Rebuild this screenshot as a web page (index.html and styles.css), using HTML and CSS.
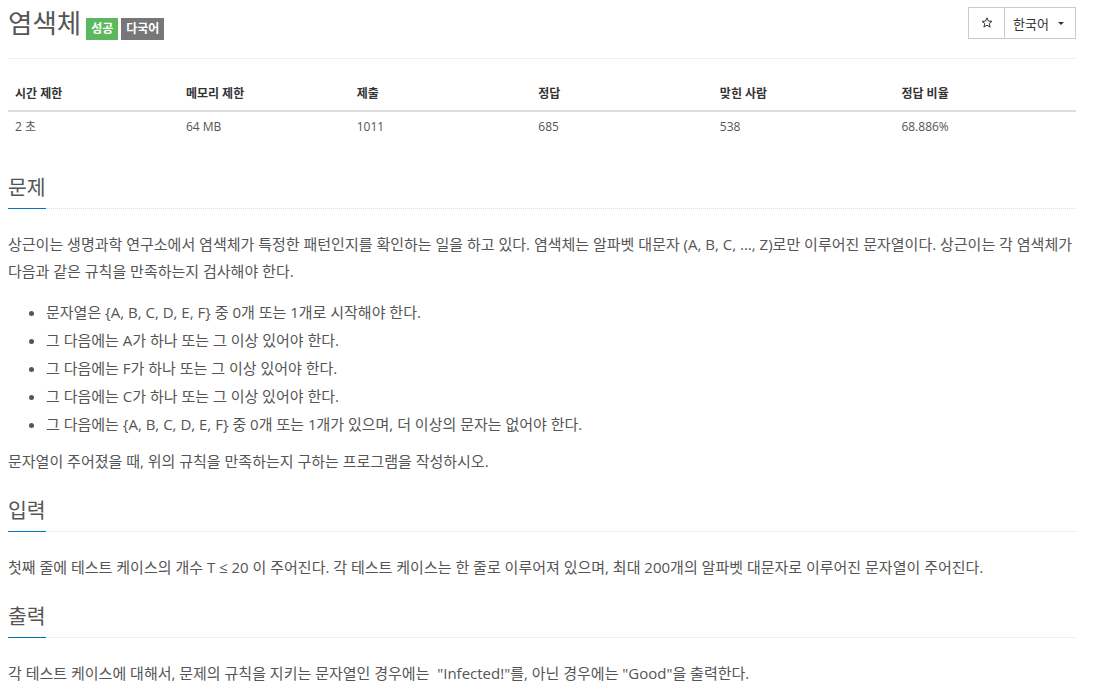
FILE: index.html
```html
<!DOCTYPE html>
<html lang="ko">
<head>
<meta charset="utf-8">
<title>염색체</title>
<link rel="stylesheet" href="styles.css">
</head>
<body>
<div class="page">
  <div class="page-header">
    <div class="title-row">
      <h1 class="title">염색체</h1>
      <span class="badge badge-success">성공</span>
      <span class="badge badge-muted">다국어</span>
    </div>
    <div class="btn-group">
      <button class="btn btn-star" type="button">
        <svg class="star-icon" width="12" height="11" viewBox="0 0 12 11"><path d="M6 0.8 L7.4 4.1 L11 4.3 L8.2 6.6 L9.1 10.1 L6 8.2 L2.9 10.1 L3.8 6.6 L1 4.3 L4.6 4.1 Z" fill="none" stroke="#333" stroke-width="1" stroke-linejoin="round"/></svg>
      </button>
      <button class="btn btn-lang" type="button"><span>한국어</span><span class="caret"></span></button>
    </div>
  </div>

  <table class="info-table">
    <colgroup>
      <col class="col-a"><col class="col-a"><col class="col-b"><col class="col-b"><col class="col-b"><col class="col-b">
    </colgroup>
    <thead>
      <tr><th>시간 제한</th><th>메모리 제한</th><th>제출</th><th>정답</th><th>맞힌 사람</th><th>정답 비율</th></tr>
    </thead>
    <tbody>
      <tr><td>2 초</td><td>64 MB</td><td>1011</td><td>685</td><td>538</td><td>68.886%</td></tr>
    </tbody>
  </table>

  <section class="section">
    <div class="headline"><h2>문제</h2></div>
    <div class="problem-text">
      <p>상근이는 생명과학 연구소에서 염색체가 특정한 패턴인지를 확인하는 일을 하고 있다. 염색체는 알파벳 대문자 (A, B, C, ..., Z)로만 이루어진 문자열이다. 상근이는 각 염색체가 다음과 같은 규칙을 만족하는지 검사해야 한다.</p>
      <ul>
        <li>문자열은 {A, B, C, D, E, F} 중 0개 또는 1개로 시작해야 한다.</li>
        <li>그 다음에는 A가 하나 또는 그 이상 있어야 한다.</li>
        <li>그 다음에는 F가 하나 또는 그 이상 있어야 한다.</li>
        <li>그 다음에는 C가 하나 또는 그 이상 있어야 한다.</li>
        <li>그 다음에는 {A, B, C, D, E, F} 중 0개 또는 1개가 있으며, 더 이상의 문자는 없어야 한다.</li>
      </ul>
      <p>문자열이 주어졌을 때, 위의 규칙을 만족하는지 구하는 프로그램을 작성하시오.</p>
    </div>
  </section>

  <section class="section">
    <div class="headline"><h2>입력</h2></div>
    <div class="problem-text">
      <p>첫째 줄에 테스트 케이스의 개수 T ≤ 20 이 주어진다. 각 테스트 케이스는 한 줄로 이루어져 있으며, 최대 200개의 알파벳 대문자로 이루어진 문자열이 주어진다.</p>
    </div>
  </section>

  <section class="section">
    <div class="headline"><h2>출력</h2></div>
    <div class="problem-text">
      <p>각 테스트 케이스에 대해서, 문제의 규칙을 지키는 문자열인 경우에는 &nbsp;"Infected!"를, 아닌 경우에는 "Good"을 출력한다.</p>
    </div>
  </section>
</div>
</body>
</html>
```
FILE: styles.css
```css
html, body {
  margin: 0;
  padding: 0;
  background: #fff;
}

body {
  font-family: "Open Sans", "Noto Sans CJK KR", sans-serif;
  font-size: 15px;
  color: #555;
}

.page {
  width: 1068px;
  margin-left: 8px;
}

/* header */
.page-header {
  display: flex;
  justify-content: space-between;
  align-items: flex-start;
  padding: 7px 0 19px;
  border-bottom: 1px solid #eee;
  height: 32px;
}

.title-row {
  display: flex;
  align-items: flex-start;
}

.title {
  margin: 0;
  font-size: 26.5px;
  line-height: 32px;
  font-weight: normal;
  color: #555;
}

.badge {
  margin-top: 11px;
  height: 22px;
  line-height: 22px;
  padding: 0 5px;
  font-size: 12px;
  font-weight: bold;
  color: #fff;
}

.badge-success {
  margin-left: 5px;
  background: #5cb85c;
}

.badge-muted {
  margin-left: 3px;
  background: #777;
}

.btn-group {
  display: flex;
  height: 32px;
}

.btn {
  box-sizing: border-box;
  height: 32px;
  border: 1px solid #ccc;
  background: #fff;
  color: #333;
  font-family: "Open Sans", "Noto Sans CJK KR", sans-serif;
  font-size: 13px;
  padding: 0;
  display: flex;
  align-items: center;
}

.btn-star {
  width: 37px;
  justify-content: center;
}

.star-icon {
  display: block;
  margin-top: -1px;
}

.btn-lang {
  width: 72px;
  margin-left: -1px;
  padding-left: 8px;
}

.caret {
  display: inline-block;
  width: 0;
  height: 0;
  margin-left: 9px;
  margin-top: 1px;
  border-top: 3px solid #333;
  border-left: 3px solid transparent;
  border-right: 3px solid transparent;
}

/* info table */
.info-table {
  width: 100%;
  table-layout: fixed;
  border-collapse: collapse;
  margin-top: 18px;
  margin-bottom: 31px;
  font-size: 12px;
}

.col-a { width: 16%; }
.col-b { width: 17%; }

.info-table th {
  text-align: left;
  font-weight: bold;
  color: #333;
  padding: 8px 7px;
  line-height: 17px;
  border-bottom: 2px solid #ddd;
}

.info-table td {
  padding: 6px 7px;
  line-height: 17px;
  color: #555;
}

/* sections */
.section + .section {
  margin-top: 20px;
}

.headline {
  border-bottom: 1px dotted #ddd;
}

.headline h2 {
  display: inline-block;
  margin: 0 0 -1px;
  padding-bottom: 6px;
  border-bottom: 1px solid #0076c0;
  font-size: 20.5px;
  line-height: 30px;
  font-weight: normal;
  color: #555;
}

.problem-text {
  margin-top: 22px;
}

.problem-text p {
  margin: 0 0 13px;
  line-height: 27px;
}

.problem-text p:last-child {
  margin-bottom: 0;
}

.problem-text ul {
  margin: 0 0 10px;
  padding-left: 38px;
}

.problem-text li {
  line-height: 28px;
}
```
